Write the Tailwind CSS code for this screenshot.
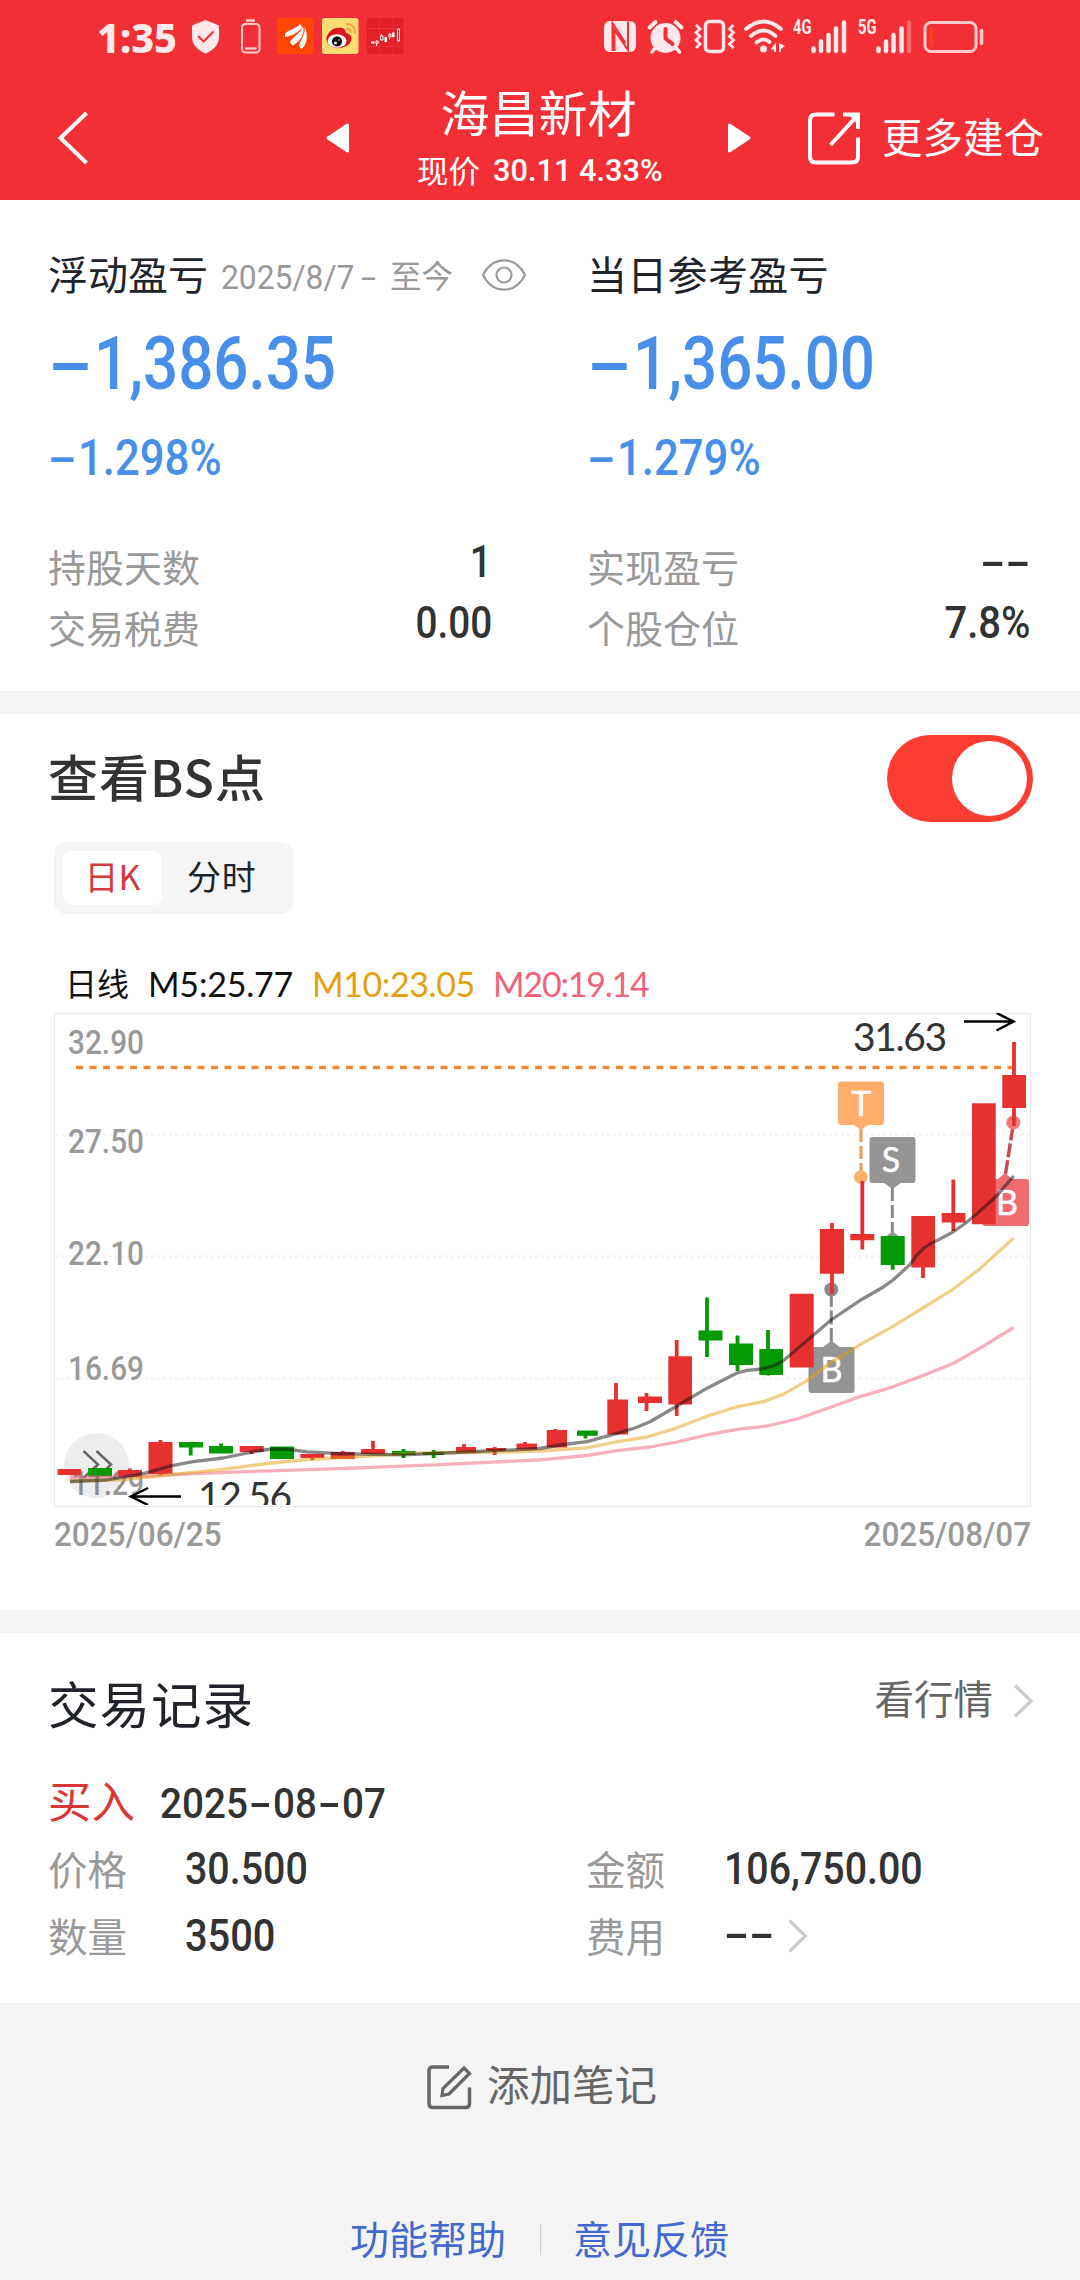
<!DOCTYPE html>
<html lang="zh-CN">
<head>
<meta charset="utf-8">
<title>海昌新材</title>
<script src="https://cdn.jsdelivr.net/npm/@tailwindcss/browser@4"></script>
</head>
<body class="w-[1080px] h-[2280px] overflow-hidden bg-[#f4f4f4] font-['Noto_Sans_CJK_SC',sans-serif] leading-none text-[#20242a] whitespace-nowrap">

<header class="h-[200px] bg-[#f22f37] text-white flex flex-col">
  <!-- status bar -->
  <div class="h-[74px] shrink-0">
    <svg class="block w-[1080px] h-[74px]" viewBox="0 0 1080 74" fill="none">
      <text x="97" y="53" font-family="Noto Sans" font-weight="800" font-size="41" textLength="80" lengthAdjust="spacingAndGlyphs" fill="#ffe8e9">1:35</text>
      <path d="M205.500 20L219 25.500V37C219 45 213 50.500 205.500 53.500C198 50.500 192 45 192 37V25.500Z" fill="#ffe8e9"/>
      <path d="M198 36L203.500 41.500L213.500 31.500" stroke="#f22f37" stroke-width="2"/>
      <rect x="242" y="24" width="17.500" height="28.500" rx="3.500" stroke="#ffc9cc" stroke-width="2"/>
      <path d="M246 20.500H255M245 48.500H256.500" stroke="#ffc9cc" stroke-width="2.500"/>
      <rect x="277" y="18" width="36.500" height="36" rx="1" fill="#ff4500"/>
      <g fill="#fff"><path d="M300 24C297 28 289 30 285 33.500V37C293 36 300 31 302.500 27Z"/><path d="M302.500 27.500C300 34 291 38 290 42.500L292.500 45.500C300 42 304 35 303.500 28Z"/><path d="M304.500 27C306 35 299 42 299 46L301.500 49C308 44 308 33 304.500 27Z"/></g>
      <rect x="322" y="18" width="36.500" height="36" rx="3" fill="#fddc74"/>
      <path d="M327 42C324 36 333 27 337 28.500C340 27 346 28 346 33C353 34 353 41 348 45C341 50 330 49 327 42Z" fill="#e0161f"/>
      <path d="M335 30C336 26 340 27 340 31Z" fill="#e0161f"/>
      <ellipse cx="337" cy="41" rx="9.500" ry="6.800" fill="#fff"/><circle cx="337" cy="41.500" r="5" fill="#000"/><circle cx="335.500" cy="43" r="1.500" fill="#fff"/><circle cx="339" cy="40" r=".8" fill="#fff"/>
      <path d="M346 24.500C352 23 356 28 354.500 33.500M346.500 29C350 28.500 351 31 350.500 33" stroke="#e9a13b" stroke-width="2.200"/>
      <rect x="367" y="18" width="36.500" height="36" fill="#e32028"/>
      <path d="M379.500 18V54M393 18V54M367 28.500H403M367 46.500H403" stroke="#e8353c" stroke-width=".8"/>
      <path d="M371 43.500V41.500H374.500V43.500ZM384.500 42V37H387V42ZM392 37V32.500H394.500V37Z" fill="#fff"/>
      <path d="M376.500 46V43.500M376 41H378V43.500H376ZM381.500 34V36M380.500 36H383V40H380.500ZM389 34H391V37H389ZM397.500 29H399.500V41H397.500ZM389.500 38V39.500" stroke="#fff"/>

      <g fill="#ffe8e9">
        <rect x="604" y="21" width="32" height="31" rx="6"/>
        <path d="M612.500 51V23L625.500 43M628 21.500V50L614.500 30V51" stroke="#f22f37" stroke-width="2"/>
        <circle cx="665.500" cy="38" r="15"/>
        <path d="M649.500 27.500L655.500 22M681.500 27.500L675.500 22" stroke="#ffe8e9" stroke-width="4" stroke-linecap="round"/>
        <path d="M655 48L652 52M676 48L679.500 52" stroke="#ffe8e9" stroke-width="3.500" stroke-linecap="round"/>
        <path d="M665.500 29V38.500L672.500 44" stroke="#f22f37" stroke-width="4" stroke-linejoin="round" stroke-linecap="round" fill="none"/>
      </g>
      <rect x="705.500" y="21.500" width="18" height="30" rx="4" stroke="#ffe8e9" stroke-width="3.500"/>
      <path d="M696 25L700 29L696 32.500L700 36.500L696 40L700 44L696 48M733.500 25L729.500 29L733.500 32.500L729.500 36.500L733.500 40L729.500 44L733.500 48" stroke="#ffe8e9" stroke-width="2.800"/>
      <path d="M746 29Q763.500 14 781 29M751 36Q763.500 25 775.500 36M756.500 42.500Q763.500 36.500 769.500 42" stroke="#ffe8e9" stroke-width="3.800" stroke-linecap="round"/>
      <circle cx="763.500" cy="49" r="3.500" fill="#ffe8e9"/>
      <path d="M770.500 49.500L776 42.500V52H774V49.500ZM779 43V52H781V49L785 46Z" fill="#ffe8e9"/>
      <g font-family="Roboto" font-weight="700" font-size="20" fill="#ffe8e9"><text x="793" y="33.500" textLength="18.500" lengthAdjust="spacingAndGlyphs">4G</text><text x="858" y="33.500" textLength="18.500" lengthAdjust="spacingAndGlyphs">5G</text></g>
      <g stroke="#ffe8e9" stroke-width="4.500" stroke-linecap="round"><path d="M813.500 48.500V51M821 41.500V51M828.500 35V51M836 28.500V51M844 22.500V51M878.500 48.500V51M886 41.500V51M893.500 35V51M901.500 28.500V51"/><path d="M909 22.500V51" stroke="#fb6a70"/></g>
      <rect x="925" y="22.500" width="51" height="29" rx="6" stroke="#ffc9cc" stroke-width="3"/>
      <rect x="929" y="27" width="4.500" height="20" rx="1" fill="#ff3b22"/>
      <path d="M981.500 30.500V43.500" stroke="#ffc9cc" stroke-width="3.500" stroke-linecap="round"/>
    </svg>
  </div>
  <!-- title bar -->
  <div class="h-[126px] flex items-start">
    <svg class="ml-[57px] mt-[36px] w-[32px] h-[56px]" viewBox="0 0 32 56" fill="none"><path d="M29.500 3L3.500 28L29.500 53" stroke="#fff" stroke-width="4"/></svg>
    <svg class="ml-[236px] mt-[48px] w-[26px] h-[32px]" viewBox="0 0 26 32"><path d="M3 16L22.500 3V29Z" fill="#fff" stroke="#fff" stroke-width="3" stroke-linejoin="round"/></svg>
    <div class="w-[375px] flex flex-col items-center">
      <h1 class="mt-[11px] h-[52px] leading-[52px] text-[49px]">海昌新材</h1>
      <div class="mt-[13px] h-[40px] w-[243px] flex items-center"><span class="text-[31.500px]">现价</span><span class="ml-[13px] font-['Roboto'] font-medium text-[32px] inline-block origin-left scale-x-[0.96]">30.11 4.33%</span></div>
    </div>
    <svg class="mt-[48px] w-[26px] h-[32px]" viewBox="0 0 26 32"><path d="M23 16L3.500 3V29Z" fill="#fff" stroke="#fff" stroke-width="3" stroke-linejoin="round"/></svg>
    <svg class="ml-[54px] mt-[36px] w-[56px] h-[56px]" viewBox="0 0 56 56" fill="none" stroke="#fff" stroke-width="4"><path d="M28.500 4.500H10Q4 4.500 4 10.500V46.500Q4 52.500 10 52.500H46Q52 52.500 52 46.500V27.500M24.500 35L50 7M37 4.500H52V19"/><path d="M44 5L51.500 12.500V5Z" fill="#fff" stroke-width="2"/></svg>
    <span class="ml-[20px] mt-[42px] text-[40.500px]">更多建仓</span>
  </div>
</header>

<!-- profit summary -->
<section class="h-[491px] bg-white pt-[48px] pl-[48px] grid grid-cols-[444px_444px] gap-x-[95px] content-start">
  <div>
    <div class="h-[50px] flex items-center">
      <span class="text-[40px]">浮动盈亏</span>
      <span class="ml-[13px] mt-[7px] w-[169px] shrink-0 text-[#999] font-['Roboto'] text-[34px] flex"><span class="block w-[140px] shrink-0"><span class="inline-block origin-left scale-x-[0.935]">2025/8/7</span></span><span class="block w-[15px] origin-left scale-x-[1.600]">-</span></span>
      <span class="mt-[3px] text-[#999] text-[31.500px]">至今</span>
      <svg class="ml-[28px] mt-[4px] w-[46px] h-[34px] shrink-0" viewBox="0 0 46 34" fill="none" stroke="#999" stroke-width="2.200"><path d="M2 17C12-2.500 34-2.500 44 17C34 36.500 12 36.500 2 17Z" stroke-linejoin="round"/><circle cx="23" cy="17" r="7.500"/></svg>
    </div>
    <div class="h-[130px] flex items-center text-[#478fe9] font-['Roboto'] font-medium text-[75px]"><span class="w-[46px] inline-block"><span class="inline-block origin-left scale-x-[1.780]">-</span></span><span class="inline-block origin-left scale-x-[0.825]">1,386.35</span></div>
    <div class="h-[60px] flex items-center text-[#478fe9] font-['Roboto'] font-medium text-[50.500px]"><span class="w-[30px] inline-block"><span class="inline-block origin-left scale-x-[1.700]">-</span></span><span class="inline-block origin-left scale-x-[0.865]">1.298%</span></div>
    <div class="mt-[47px] h-[61px] flex items-center justify-between"><span class="text-[38px] text-[#999]">持股天数</span><span class="mb-[6px] text-[#333] font-['Roboto'] font-medium text-[43.500px] inline-block origin-right scale-x-[0.890]">1</span></div>
    <div class="h-[61px] flex items-center justify-between"><span class="text-[38px] text-[#999]">交易税费</span><span class="mb-[6px] text-[#333] font-['Roboto'] font-medium text-[43.500px] inline-block origin-right scale-x-[0.890]">0.00</span></div>
  </div>
  <div>
    <div class="h-[50px] flex items-center"><span class="text-[40px] tracking-[0.3px]">当日参考盈亏</span></div>
    <div class="h-[130px] flex items-center text-[#478fe9] font-['Roboto'] font-medium text-[75px]"><span class="w-[46px] inline-block"><span class="inline-block origin-left scale-x-[1.780]">-</span></span><span class="inline-block origin-left scale-x-[0.825]">1,365.00</span></div>
    <div class="h-[60px] flex items-center text-[#478fe9] font-['Roboto'] font-medium text-[50.500px]"><span class="w-[30px] inline-block"><span class="inline-block origin-left scale-x-[1.700]">-</span></span><span class="inline-block origin-left scale-x-[0.865]">1.279%</span></div>
    <div class="mt-[47px] h-[61px] flex items-center justify-between"><span class="text-[38px] text-[#999]">实现盈亏</span><span class="mb-[6px] text-[#333] font-['Roboto'] font-medium text-[43.500px] inline-block origin-right scale-x-[1.700]">--</span></div>
    <div class="h-[61px] flex items-center justify-between"><span class="text-[38px] text-[#999]">个股仓位</span><span class="mb-[6px] text-[#333] font-['Roboto'] font-medium text-[43.500px] inline-block origin-right scale-x-[0.920]">7.8%</span></div>
  </div>
</section>

<!-- chart -->
<section class="mt-[23px] h-[896px] bg-white pt-[21px]">
  <div class="h-[87px] pl-[48px] pr-[47px] flex items-center justify-between">
    <h2 class="mb-[7px] text-[50px] font-medium tracking-[1px] text-[#333]">查看BS点</h2>
    <div class="w-[146px] h-[87px] rounded-full bg-[#fb3d33] p-[6px] flex justify-end"><div class="size-[75px] rounded-full bg-white"></div></div>
  </div>
  <div class="ml-[54px] mt-[20px] w-[239px] h-[72px] rounded-xl bg-[#f5f5f5] p-[9px] flex text-[34px]">
    <span class="w-[99px] rounded-lg bg-white text-[#d33a3a] flex items-center justify-center pb-[4px]">日K</span>
    <span class="ml-[25px] flex items-center pb-[4px] tracking-[0.8px]">分时</span>
  </div>
  <div class="ml-[65px] mt-[46px] h-[44px] flex items-center text-[#111] text-[32px]">
    <span class="w-[83px]">日线</span>
    <span class="w-[164px] mt-[3px] font-['Lato'] text-[34px] tracking-[-0.2px]">M5:25.77</span>
    <span class="w-[181px] mt-[3px] font-['Lato'] text-[34px] text-[#e5a010] tracking-[-0.4px]">M10:23.05</span>
    <span class="mt-[3px] font-['Lato'] text-[34px] text-[#f0637a] tracking-[-1.2px]">M20:19.14</span>
  </div>
  <svg class="block ml-[54px] mt-[9px] w-[978px] h-[495px]" viewBox="54 1013 978 495" fill="none">
    <rect x="54.500" y="1013.500" width="976" height="493" stroke="#ebebeb"/>
    <path d="M55 1134.500H1030M55 1256.500H1030M55 1378.500H1030" stroke="#f3f3f3" stroke-width="2.500" stroke-dasharray="3 3"/>
    <path d="M76 1067.500H1013" stroke="#ec8a38" stroke-width="3.300" stroke-dasharray="7 6.500"/>
    <g font-family="Roboto" font-size="34" fill="#999" font-weight="500">
      <text x="68" y="1054" textLength="76" lengthAdjust="spacingAndGlyphs">32.90</text><text x="68" y="1153" textLength="76" lengthAdjust="spacingAndGlyphs">27.50</text><text x="68" y="1265" textLength="76" lengthAdjust="spacingAndGlyphs">22.10</text><text x="68" y="1380" textLength="76" lengthAdjust="spacingAndGlyphs">16.69</text><text x="72" y="1495" textLength="72" lengthAdjust="spacingAndGlyphs">11.29</text>
    </g>
    <circle cx="96.500" cy="1465.500" r="32.500" fill="#000" fill-opacity=".07"/>
    <path d="M83.500 1451L98 1464.500L83.500 1478M96.500 1451L111 1464.500L96.500 1478" stroke="#666" stroke-width="2.500"/>
    <g font-family="Lato" font-size="39" fill="#333"><text x="853" y="1050.500" textLength="94">31.63</text></g>
    <clipPath id="plot"><rect x="55" y="1013" width="976" height="492"/></clipPath>
    <g clip-path="url(#plot)">
      <text x="198" y="1509.500" textLength="94" font-family="Lato" font-size="39" fill="#333">12.56</text>
      <path d="M181 1496.500H131M148 1488L131 1496.500L148 1505M964 1021.500H1013M996.500 1013L1013.500 1021.500L996.500 1030.500" stroke="#000" stroke-width="2.500"/>
    </g>
    <!-- trade markers -->
    <g>
      <path d="M861 1129V1176" stroke="#ee9a55" stroke-width="3" stroke-dasharray="13 4"/><circle cx="860.700" cy="1177" r="6.800" fill="#ffae6c"/>
      <path d="M841 1081.500H881Q884 1081.500 884 1084.500V1122Q884 1125 881 1125H868L861 1130L854 1125H841Q838 1125 838 1122V1084.500Q838 1081.500 841 1081.500Z" fill="#ffae6c"/>
      <path d="M892.300 1188V1240" stroke="#888" stroke-width="3" stroke-dasharray="13 4"/><circle cx="892.500" cy="1240" r="7" fill="#949494"/>
      <path d="M872.500 1137H912.500Q915.500 1137 915.500 1140V1180Q915.500 1183 912.500 1183H901L892.500 1189L884 1183H872.500Q869.500 1183 869.500 1180V1140Q869.500 1137 872.500 1137Z" fill="#949494"/>
      <path d="M831.300 1342V1292" stroke="#888" stroke-width="3" stroke-dasharray="14 3.500"/><circle cx="831.300" cy="1289.500" r="7" fill="#8a8a8a"/>
      <path d="M811.500 1347H823L831.500 1341L840 1347H851.500Q854.500 1347 854.500 1350V1390Q854.500 1393 851.500 1393H811.500Q808.500 1393 808.500 1390V1350Q808.500 1347 811.500 1347Z" fill="#949494"/>
      <path d="M1005.500 1174L1013 1126" stroke="#c94a4f" stroke-width="3.500" stroke-dasharray="14 3"/><circle cx="1013.300" cy="1122.500" r="7" fill="#f4787c"/>
      <path d="M985.500 1179H998L1005 1173L1012 1179H1026Q1029 1179 1029 1182V1223Q1029 1226 1026 1226H985.500Q982.500 1226 982.500 1223V1182Q982.500 1179 985.500 1179Z" fill="#f06c6e"/>
      <g font-family="Lato" font-size="34" fill="#fff" stroke="#fff" stroke-width=".5" text-anchor="middle"><text x="861" y="1115.500">T</text><text x="891" y="1172">S</text><text x="831.500" y="1382">B</text><text x="1007" y="1215">B</text></g>
    </g>
    <!-- candles -->
    <g fill="#e73131">
      <path d="M57.500 1469h23.500v6h-23.500zM118 1470h24v7h-24zM148.500 1442h24v32h-24zM239.700 1446h24v6h-24zM300.300 1454h24v4h-24zM330.700 1452h24v7h-24zM361 1449h24v5h-24zM456 1447h20v5.500h-20zM486 1448h20v3h-20zM516.500 1443.500h20.500v6h-20.500zM546.700 1430h20.300v17.500h-20.300zM607.300 1399.500h20.700v35h-20.700zM638 1396.500h24v6.500h-24zM668.300 1356.200h23.700v48.300h-23.700zM789.700 1293.700h24v73.800h-24zM820 1229h24v44.700h-24zM850.300 1234h24v6.300h-24zM911.300 1216h23.700v51.500h-23.700zM941.700 1213h23.700v9.500h-23.700zM972 1103.200h23.700v121h-23.700zM1002.300 1075h23.700v33h-23.700z"/>
    </g>
    <path d="M130 1468.500V1475M160.500 1440V1475.500M251.500 1450V1454M312.300 1456V1460M342.700 1451V1455M373 1441V1450M464 1444V1450M494.700 1447V1455M525 1442V1448M555.300 1429V1435M616 1383V1402M646.500 1393V1411M676.700 1340V1416M832 1223V1294M862.300 1181V1249.500M923 1260V1278M953.300 1179.500V1231M1014 1042V1126" stroke="#e73131" stroke-width="3.800"/>
    <path fill="#049a04" d="M88 1468h24v8.500h-24zM179 1442h24v5.500h-24zM209 1446h24v7.500h-24zM270 1446.500h24v12.500h-24zM392 1451h23.500v4h-23.500zM423 1452h21v3h-21zM577 1430.500h20.700v5.300h-20.700zM698.500 1330.500h24v10h-24zM729 1343.500h24v21.500h-24zM759.300 1349h23.700v26h-23.700zM880.700 1236h24v29h-24z"/>
    <path d="M190.700 1445V1455.500M221 1443.500V1450M403.500 1449V1458M433.700 1450V1458M585.500 1434V1438.500M707 1297.500V1357M737.500 1335.500V1371M768 1330V1375.500M892.700 1260V1269.700" stroke="#049a04" stroke-width="3.800"/>
    <!-- moving averages -->
    <g stroke-width="3.300" stroke-linejoin="round">
      <polyline stroke="#f0607a" stroke-opacity=".5" points="70,1477 127,1477 173,1474.700 240,1471.800 340,1468.600 440,1464.600 540,1459.800 587,1455.500 617,1450.700 650,1447 677,1442 707,1434.800 737,1429.300 767,1426 797,1419 830,1407.500 860,1396.600 893,1386.800 923,1375.500 953,1363.500 983,1346.400 1013.700,1327.500"/>
      <polyline stroke="#e5a010" stroke-opacity=".5" points="70,1480.500 123,1479.800 173,1474.400 223,1469.300 267,1463.500 307,1459.500 360,1456.600 417,1453 507,1452 540,1451 587,1447.800 617,1441.700 647,1437 677,1427.800 707,1416.200 737,1406.800 763,1401.700 783,1394.400 807,1380.600 831,1362.400 860,1344.600 893,1326.400 923,1307.900 953,1289.300 980,1268.600 1013.700,1238"/>
      <polyline stroke="#111" stroke-opacity=".5" points="70,1481.500 107,1480 143,1473.600 172,1465.700 193,1461.700 223,1458 253,1451.800 268,1449.500 280,1449 290,1449.500 307,1451.800 340,1453.600 403,1454.800 467,1452 540,1448.500 560,1445 587,1441.700 617,1433.300 635,1428 650,1421.700 677,1406 707,1388.200 737,1373 747,1370.300 762,1369 773,1366 783,1361 803,1344 831,1320 862,1299.200 883,1287.200 893,1280 910,1264.600 917,1255 923,1248.800 930,1244 937,1240.600 953,1232 965,1223.500 977,1213.700 997,1195.600 1013.700,1176"/>
    </g>
  </svg>
  <div class="h-[52px] pl-[54px] pr-[49px] flex items-center justify-between text-[#999] font-['Roboto'] font-medium text-[34px]"><span class="inline-block origin-left scale-x-[0.925]">2025/06/25</span><span class="inline-block origin-right scale-x-[0.925]">2025/08/07</span></div>
</section>

<!-- trade records -->
<section class="mt-[23px] h-[370px] bg-white pt-[40px] pl-[48px]">
  <div class="h-[60px] pr-[46px] flex items-center">
    <h2 class="flex-1 text-[50.500px] tracking-[1px] mb-[1px]">交易记录</h2>
    <span class="mb-[12px] text-[39.500px] text-[#666]">看行情</span>
    <svg class="ml-[19px] mb-[4px] w-[22px] h-[36px]" viewBox="0 0 22 36" fill="none"><path d="M3 2.500L19 18L3 33.500" stroke="#ccc" stroke-width="3.300"/></svg>
  </div>
  <div class="mt-[42px] h-[50px] flex items-center">
    <span class="w-[112px] text-[43.500px] text-[#d93636]">买入</span>
    <span class="mt-[7px] text-[#333] font-['Roboto'] font-medium text-[42px] flex"><span class="w-[89px] inline-block"><span class="inline-block origin-left scale-x-[0.92]">2025</span></span><span class="w-[24px] inline-block"><span class="inline-block origin-left scale-x-[1.600]">-</span></span><span class="w-[45px] inline-block"><span class="inline-block origin-left scale-x-[0.92]">08</span></span><span class="w-[24px] inline-block"><span class="inline-block origin-left scale-x-[1.600]">-</span></span><span class="inline-block origin-left scale-x-[0.92]">07</span></span>
  </div>
  <div class="mt-[13px] h-[60px] flex items-center text-[#999] text-[39.500px]">
    <span class="w-[137px]">价格</span><span class="w-[401px] mt-[3px]"><span class="text-[#333] font-['Roboto'] font-medium text-[43.500px] inline-block origin-left scale-x-[0.905]">30.500</span></span>
    <span class="w-[138px]">金额</span><span class="mt-[3px] text-[#333] font-['Roboto'] font-medium text-[43.500px] inline-block origin-left scale-x-[0.905]">106,750.00</span>
  </div>
  <div class="mt-[7px] h-[60px] flex items-center text-[#999] text-[39.500px]">
    <span class="w-[137px]">数量</span><span class="w-[401px] mt-[2px]"><span class="text-[#333] font-['Roboto'] font-medium text-[43.500px] inline-block origin-left scale-x-[0.915]">3500</span></span>
    <span class="w-[138px]">费用</span><span class="w-[63px] text-[#333] font-['Roboto'] font-medium text-[43.500px]"><span class="inline-block origin-left scale-x-[1.700]">--</span></span>
    <svg class="mt-[1px] w-[22px] h-[36px]" viewBox="0 0 22 36" fill="none"><path d="M2.500 2.500L18.500 18L2.500 33.500" stroke="#ccc" stroke-width="3.300"/></svg>
  </div>
</section>

<footer class="pt-[57px]">
  <div class="h-[46px] pl-[426px] flex items-center text-[#666]">
    <svg class="mt-[8px] w-[47px] h-[46px]" viewBox="0 0 47 46" fill="none" stroke="#666" stroke-width="3.500"><path d="M23 3H7Q3 3 3 7V39.500Q3 43.500 7 43.500H39.500Q43.500 43.500 43.500 39.500V23.500"/><path d="M38 4L43.500 9.500L23 30L16 31.500L17 24.500Z" stroke-width="3.200"/></svg>
    <span class="ml-[14px] text-[42.500px]">添加笔记</span>
  </div>
  <div class="mt-[106px] h-[50px] pl-[350px] flex items-center text-[#4169cf] text-[39px]">
    <span>功能帮助</span><span class="ml-[34px] mr-[32px] mt-[5px] w-px h-[31px] bg-[#ccc]"></span><span>意见反馈</span>
  </div>
</footer>
</body>
</html>
